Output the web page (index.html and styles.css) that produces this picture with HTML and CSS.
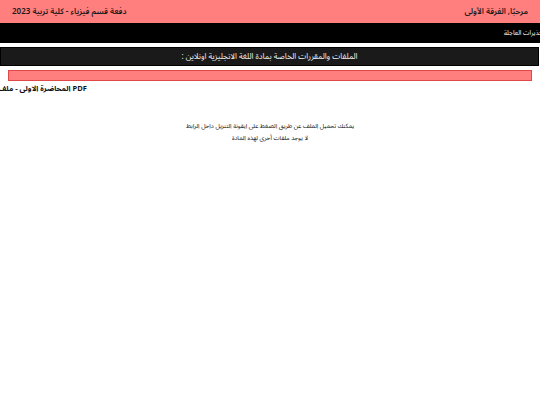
FILE: index.html
```html
<!DOCTYPE html>
<html lang="ar">
<head>
<meta charset="utf-8">
<link rel="stylesheet" href="styles.css">
</head>
<body>
<header class="topbar">
  <div class="welcome">مرحبًا, الفرقة الأولى</div>
  <div class="brand">دفعة قسم فيزياء - كلية تربية 2023</div>
</header>
<nav class="news"><span class="news-text">تحذيرات العاجلة</span></nav>
<section class="panel">
  <div class="panel-title">الملفات والمقررات الخاصة بمادة اللغة الانجليزية اونلاين :</div>
</section>
<div class="alert"></div>
<div class="file-row"><span class="file-link">PDF المحاضرة الاولى - ملف</span></div>
<div class="notes">
  <p>يمكنك تحميل الملف عن طريق الضغط على ايقونة التنزيل داخل الرابط</p>
  <p>لا يوجد ملفات أخرى لهذه المادة</p>
</div>
</body>
</html>
```
FILE: styles.css
```css
* { box-sizing: border-box; }
html, body { margin: 0; padding: 0; background: #fff; }
body {
  font-family: "Noto Sans Arabic", "Noto Naskh Arabic", "Noto Sans", "DejaVu Sans", sans-serif;
  direction: rtl;
  width: 540px;
  overflow: hidden;
}
.topbar {
  height: 23px;
  background: #ff7f7f;
  display: flex;
  justify-content: space-between;
  align-items: center;
  padding: 0 12px 0 12px;
  color: #1a1a1a;
  font-size: 8px;
  font-weight: 600;
}
.news {
  height: 20px;
  background: #000;
  color: #fff;
  font-size: 6.5px;
  display: flex;
  align-items: center;
  overflow: hidden;
}
.news-text { margin-right: -5px; white-space: nowrap; }
.panel {
  margin-top: 4px;
  height: 19px;
  background: #1a1a1a;
  border: 1px solid #000;
  margin-right: 1px;
  display: flex;
  align-items: center;
  justify-content: center;
}
.panel-title { color: #f0f0f0; font-size: 8px; }
.alert {
  margin: 4px 8px 0 8px;
  height: 11px;
  background: #ff7f7f;
  border: 1px solid #e04848;
}
.file-row {
  direction: ltr;
  height: 16px;
  display: flex;
  align-items: center;
  overflow: hidden;
}
.file-link {
  direction: rtl;
  font-weight: bold;
  font-size: 7.5px;
  color: #111;
  margin-left: -2px;
  white-space: nowrap;
}
.notes {
  margin-top: 23px;
  text-align: center;
  font-size: 6.2px;
  line-height: 12px;
  color: #111;
}
.notes p { margin: 0; }
```
